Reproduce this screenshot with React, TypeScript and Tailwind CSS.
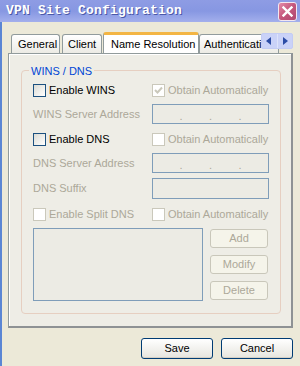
import { type ReactNode } from 'react'

type CheckProps = {
  label: string
  checked?: boolean
  disabled?: boolean
}

function Check({ label, checked = false, disabled = false }: CheckProps) {
  return (
    <div className="flex items-center gap-[3px] h-[13px]">
      <span
        className={
          disabled
            ? 'w-[13px] h-[13px] border border-[#cac8bb] bg-white flex items-center justify-center'
            : 'w-[13px] h-[13px] border border-[#1c5180] bg-linear-to-br from-[#dcdcd5] to-white flex items-center justify-center'
        }
      >
        {checked && (
          <svg width="9" height="9" viewBox="0 0 9 9">
            <path d="M1 4 L3.5 6.5 L8 1.5" stroke="#cac8bb" strokeWidth="2" fill="none" />
          </svg>
        )}
      </span>
      <span className={disabled ? 'text-[#aca899] leading-[13px]' : 'text-black leading-[13px]'}>{label}</span>
    </div>
  )
}

function IpField() {
  return (
    <div className="w-[117px] h-[20px] border border-[#7f9db9] bg-[#ecebe4] flex items-end pb-[3px] text-[#aca899] leading-[8px]">
      <span className="flex-1" />
      <span>.</span>
      <span className="flex-1" />
      <span>.</span>
      <span className="flex-1" />
      <span>.</span>
      <span className="flex-1" />
    </div>
  )
}

function Row({ left, right, h }: { left: ReactNode; right: ReactNode; h: string }) {
  return (
    <div className={`flex items-center ${h}`}>
      <div className="w-[119px] shrink-0">{left}</div>
      <div>{right}</div>
    </div>
  )
}

function SideButton({ label }: { label: string }) {
  return (
    <div className="w-[58px] h-[19px] rounded-[3px] border border-[#c9c7ba] bg-[#f5f4ea] text-[#aca899] flex items-center justify-center">
      {label}
    </div>
  )
}

function DialogButton({ label }: { label: string }) {
  return (
    <div className="w-[72px] h-[21px] rounded-[3px] border border-[#003c74] bg-linear-to-b from-white to-[#e6e5de] shadow-[inset_0_-1px_0_#d6d0c5] text-black flex items-center justify-center">
      {label}
    </div>
  )
}

export default function App() {
  const grey = 'text-[#aca899]'

  return (
    <div className="w-[300px] h-[366px] overflow-hidden bg-[#ece9d8] flex flex-col font-['Liberation_Sans',Arial,sans-serif] text-[11px]">
      {/* title bar */}
      <div className="h-[22px] shrink-0 flex items-center justify-between bg-linear-to-b from-[#8e9ce4] via-[#8797e2] to-[#a3afec] pl-[6px] pr-[3px]">
        <span className="font-['Liberation_Mono',monospace] font-bold text-[13px] tracking-[0.2px] text-white [text-shadow:1px_1px_0_#4a58a8]">
          VPN Site Configuration
        </span>
        <div className="w-[19px] h-[19px] rounded-[3px] border border-[#f2e6f0] bg-linear-to-br from-[#e48aa8] via-[#c4577c] to-[#b04870] flex items-center justify-center">
          <svg width="11" height="11" viewBox="0 0 11 11">
            <path d="M1.5 1.5 L9.5 9.5 M9.5 1.5 L1.5 9.5" stroke="white" strokeWidth="2.4" strokeLinecap="square" />
          </svg>
        </div>
      </div>

      <div className="flex-1 flex">
        <div className="w-[2px] bg-[#5b86d4]" />
        <div className="flex-1 flex flex-col pl-[6px] pt-[9px]">
          {/* tabs */}
          <div className="relative w-[285px] h-[22px] flex items-end pl-[3px] z-10 overflow-hidden">
            <div className="h-[19px] w-[49px] border border-b-0 border-[#919b9c] rounded-t-[3px] bg-linear-to-b from-white to-[#ecebe5] flex items-center pl-[6px]">General</div>
            <div className="ml-[2px] h-[19px] w-[40px] border border-b-0 border-[#919b9c] rounded-t-[3px] bg-linear-to-b from-white to-[#ecebe5] flex items-center pl-[5px]">Client</div>
            <div className="ml-[1px] h-[22px] w-[96px] border-x border-[#919b9c] border-t-[3px] border-t-[#f3b543] rounded-t-[3px] bg-white flex items-center pl-[7px] pb-[1px] translate-y-[1px]">
              Name Resolution
            </div>
            <div className="h-[19px] w-[80px] shrink-0 border border-b-0 border-[#919b9c] rounded-t-[3px] bg-linear-to-b from-white to-[#ecebe5] flex items-center pl-[4px] whitespace-nowrap">
              Authentication
            </div>
            <div className="absolute left-[253px] top-[2px] w-[32px] h-[16px] rounded-[2px] border border-[#c3ccf4] bg-[#cad2f8] flex">
              <div className="flex-1 flex items-center justify-center border-r border-[#dde3fb]">
                <svg width="6" height="8" viewBox="0 0 6 8"><path d="M5 0 L0 4 L5 8 Z" fill="#2c4ca6" /></svg>
              </div>
              <div className="flex-1 flex items-center justify-center">
                <svg width="6" height="8" viewBox="0 0 6 8"><path d="M1 0 L6 4 L1 8 Z" fill="#2c4ca6" /></svg>
              </div>
            </div>
          </div>

          {/* tab panel */}
          <div className="w-[285px] h-[275px] border border-[#919b9c] border-r-2 border-b-2 border-r-[#8e9294] border-b-[#8e9294] bg-[#eeede6] shadow-[inset_1px_1px_0_#fff] pl-[12px] pt-[16px]">
            <div className="relative w-[260px] h-[244px] rounded-[4px] border border-[#e6cfc1] pl-[11px] pt-[13px] flex flex-col">
              <span className="absolute left-[7px] top-[-8px] px-[2px] bg-[#eeede6] text-[#0046d5]">WINS / DNS</span>

              <Row h="h-[13px]" left={<Check label="Enable WINS" />} right={<Check label="Obtain Automatically" checked disabled />} />
              <div className="mt-[7px]">
                <Row h="h-[20px]" left={<span className={grey}>WINS Server Address</span>} right={<IpField />} />
              </div>
              <div className="mt-[9px]">
                <Row h="h-[13px]" left={<Check label="Enable DNS" />} right={<Check label="Obtain Automatically" disabled />} />
              </div>
              <div className="mt-[7px]">
                <Row h="h-[20px]" left={<span className={grey}>DNS Server Address</span>} right={<IpField />} />
              </div>
              <div className="mt-[5px]">
                <Row
                  h="h-[21px]"
                  left={<span className={grey}>DNS Suffix</span>}
                  right={<div className="w-[117px] h-[21px] border border-[#7f9db9] bg-[#ecebe4]" />}
                />
              </div>
              <div className="mt-[9px]">
                <Row h="h-[13px]" left={<Check label="Enable Split DNS" disabled />} right={<Check label="Obtain Automatically" disabled />} />
              </div>
              <div className="mt-[7px] flex gap-[7px]">
                <div className="w-[170px] h-[73px] border border-[#7f9db9] bg-[#ecebe4]" />
                <div className="flex flex-col gap-[7px] pt-[1px]">
                  <SideButton label="Add" />
                  <SideButton label="Modify" />
                  <SideButton label="Delete" />
                </div>
              </div>
            </div>
          </div>

          {/* footer */}
          <div className="w-[285px] flex justify-end gap-[8px] mt-[10px]">
            <DialogButton label="Save" />
            <DialogButton label="Cancel" />
          </div>
        </div>
      </div>
    </div>
  )
}
